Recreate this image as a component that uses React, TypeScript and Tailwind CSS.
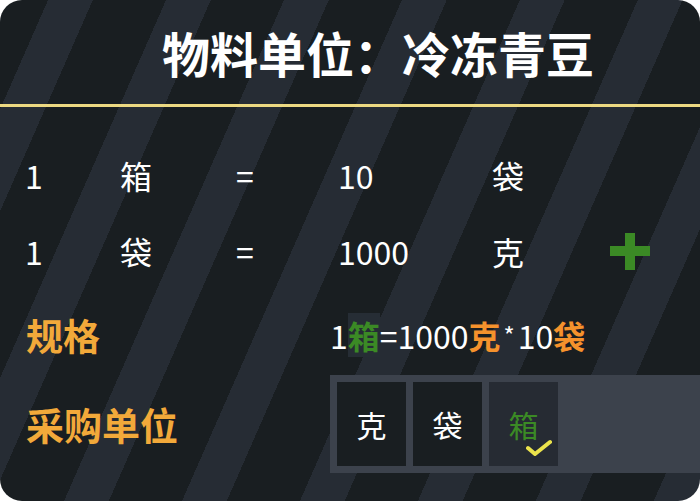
const font = { fontFamily: '"Noto Sans CJK SC", "Noto Sans", sans-serif' };

const conversions = [
  { qty: "1", from: "箱", amount: "10", to: "袋", add: false },
  { qty: "1", from: "袋", amount: "1000", to: "克", add: true },
];

const units = [
  { name: "克", selected: false },
  { name: "袋", selected: false },
  { name: "箱", selected: true },
];

function PlusIcon() {
  return (
    <svg width="40" height="37" viewBox="0 0 40 37">
      <rect x="0" y="13" width="40" height="10" fill="#3b8a25" />
      <rect x="15" y="0" width="10" height="37" fill="#3b8a25" />
    </svg>
  );
}

function Check() {
  return (
    <svg width="26" height="20" viewBox="0 0 26 20" className="absolute right-[6px] bottom-[8px]">
      <path d="M2 10 L9 16 L24 4" fill="none" stroke="#ebe34c" strokeWidth="4" strokeLinecap="round" strokeLinejoin="round" />
    </svg>
  );
}

export default function App() {
  return (
    <div className="w-[700px] h-[501px] bg-white" style={font}>
      <div className="w-full h-full rounded-[22px] overflow-hidden flex flex-col bg-[image:repeating-linear-gradient(113.7deg,#191e21_0px,#191e21_44px,#262c34_44px,#262c34_85px,#191e21_85px,#191e21_108px)]">
        {/* Header */}
        <div className="h-[104px] flex items-center justify-center pl-[56px]">
          <h1 className="text-[48px] font-bold text-white leading-none">物料单位：冷冻青豆</h1>
        </div>
        <div className="h-[3px] bg-[#ecd982]" />

        {/* Conversion rows */}
        <div className="pt-[30px]">
          {conversions.map((row, i) => (
            <div key={i} className="h-[76px] grid grid-cols-[95px_116px_102px_154px_118px_40px] items-center pl-[25px] text-[32px] text-white leading-none">
              <span>{row.qty}</span>
              <span>{row.from}</span>
              <span>=</span>
              <span>{row.amount}</span>
              <span>{row.to}</span>
              <span className="flex">{row.add && <PlusIcon />}</span>
            </div>
          ))}
        </div>

        {/* Spec */}
        <div className="h-[86px] pt-[6px] flex items-center">
          <div className="w-[330px] pl-[26px] text-[37px] font-bold text-[#f2a93a] leading-none">规格</div>
          <div className="flex items-center text-[32px] text-white leading-none">
            <span>1</span>
            <span className="bg-[#262d35] text-[#3b8a25] font-bold py-[6px]">箱</span>
            <span>=1000</span>
            <span className="text-[#f5922c] font-bold">克</span>
            <span className="text-[24px] px-[3px]">*</span>
            <span>10</span>
            <span className="text-[#f5922c] font-bold">袋</span>
          </div>
        </div>

        {/* Purchase unit */}
        <div className="h-[98px] flex items-center">
          <div className="w-[330px] pl-[26px] text-[38px] font-bold text-[#f2a93a] leading-none">采购单位</div>
          <div className="flex-1 h-full bg-[#3c424c] p-[7px] flex gap-[7px]">
            {units.map((u) => (
              <div
                key={u.name}
                className={`relative w-[69px] h-[84px] flex items-center justify-center text-[30px] leading-none ${
                  u.selected ? "bg-[#262b33] text-[#3b8a25]" : "bg-[#191e21] text-white"
                }`}
              >
                {u.name}
                {u.selected && <Check />}
              </div>
            ))}
          </div>
        </div>
      </div>
    </div>
  );
}
